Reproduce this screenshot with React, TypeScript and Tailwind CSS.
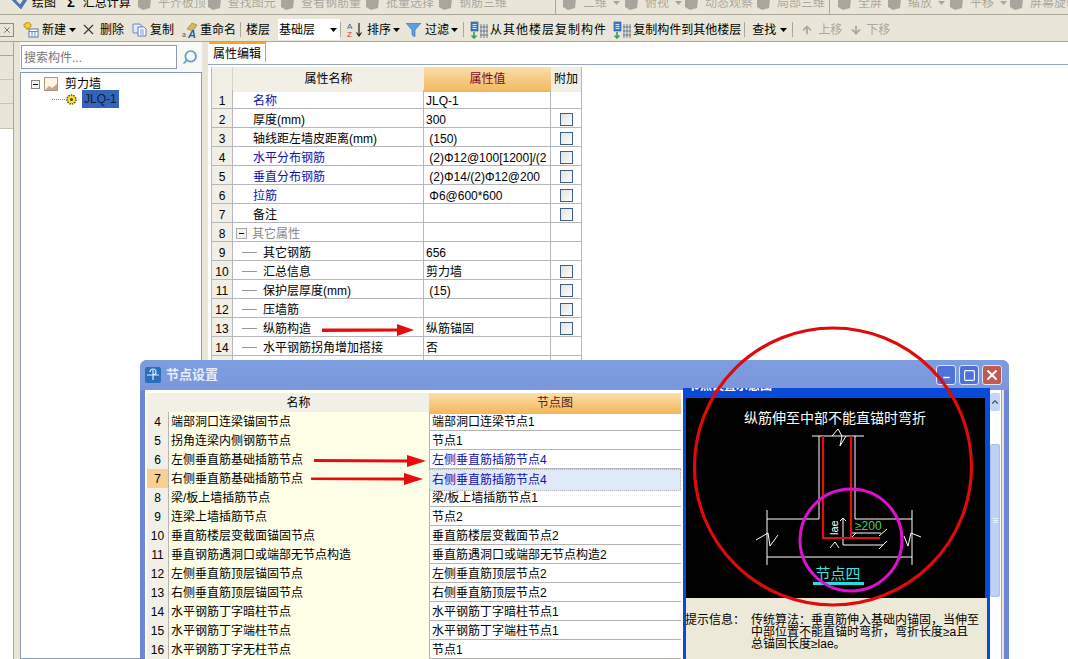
import type { ReactNode } from "react";
import { ArrowDown, ArrowUp, ChevronUp, Minus, Search, Square, X } from "lucide-react";

const Caret = ({ className = "" }: { className?: string }) => (
  <svg width="7" height="4" viewBox="0 0 7 4" className={`shrink-0 ${className}`}>
    <path d="M0 0h7L3.5 4z" fill="currentColor" />
  </svg>
);

const GreyIcon = () => (
  <svg width="15" height="14" viewBox="0 0 15 14" className="shrink-0">
    <path d="M1 2l8-2 5 3-1 9-7 2-5-3z" fill="#a8a69c" />
  </svg>
);

const Sep = ({ className = "" }: { className?: string }) => (
  <div className={`w-px shrink-0 self-stretch bg-[#aca899] ${className}`} />
);

const NewIcon = () => (
  <svg width="16" height="16" viewBox="0 0 16 16" className="ml-[9px] shrink-0">
    <rect x="6" y="7" width="9" height="8" fill="#fff" stroke="#5577aa" />
    <path d="M6 9.5h9M9 9.5v5M12 9.5v5" stroke="#5b8bd0" />
    <path d="M3 0h3v2h2v3H6v2H3V5H1V2h2z" fill="#f4d040" stroke="#a08a20" strokeWidth=".7" />
  </svg>
);

const CopyIcon = () => (
  <svg width="15" height="14" viewBox="0 0 15 14" className="ml-[8px] shrink-0">
    <path d="M1 1h7l2 2v7H1z" fill="#dfe9f8" stroke="#6b8cc0" />
    <path d="M6 4h6l2 2v7H6z" fill="#fff" stroke="#5a7bb5" />
    <path d="M8 7h4M8 9h4M8 11h4" stroke="#7a9ad0" />
  </svg>
);

const RenameIcon = () => (
  <svg width="16" height="16" viewBox="0 0 16 16" className="ml-[8px] shrink-0">
    <path d="M5 7l5-6 5 2-4 6z" fill="#d8b850" stroke="#8a7a40" strokeWidth=".6" />
    <text x="0" y="15" fontSize="7" fill="#555">a</text>
    <text x="6" y="15.5" fontSize="11" fontWeight="700" fontStyle="italic" fill="#2a5aa8">A</text>
  </svg>
);

const SortIcon = () => (
  <svg width="16" height="16" viewBox="0 0 16 16" className="ml-[6px] shrink-0">
    <text x="0" y="7" fontSize="8" fill="#2a5aa8">A</text>
    <text x="0" y="15" fontSize="8" fill="#c04030">Z</text>
    <path d="M12 1v12M9.5 10.5l2.5 3.500 2.500-3.500" fill="none" stroke="#222" strokeWidth="1.2" />
  </svg>
);

const FunnelIcon = () => (
  <svg width="15" height="14" viewBox="0 0 15 14" className="ml-[6px] shrink-0">
    <path d="M0 0h15L9 7v7L6 12V7z" fill="#5fa0e0" stroke="#35689f" strokeWidth=".6" />
  </svg>
);

const LayerCopyIcon = ({ className = "" }: { className?: string }) => (
  <svg width="18" height="18" viewBox="0 0 18 18" className={`shrink-0 ${className}`}>
    <rect x="1" y="1" width="7" height="9" fill="#3b78d0" stroke="#24508f" strokeWidth=".6" />
    <path d="M2.500 3.500h4M2.500 5.500h4M2.500 7.500h4" stroke="#fff" strokeWidth=".8" />
    <path d="M4 11v6M1.500 14.500L4 17l2.500-2.500" fill="none" stroke="#32a050" strokeWidth="1.6" />
    <path d="M11 3v14M14 3v14M17 3v14M10 6h8M10 10h8M10 14h8" stroke="#53677f" strokeWidth=".8" />
  </svg>
);

const TopItem = ({ label, caret, className }: { label: string; caret?: boolean; className: string }) => (
  <div className={`flex shrink-0 items-center text-[12px] text-[#aaa89c] ${className}`}>
    <GreyIcon />
    <span className="ml-[6px]">{label}</span>
    {caret && <Caret className="ml-[6px] text-[#a8a69c]" />}
  </div>
);

const TopBar = () => (
  <div className="h-[15px] shrink-0 overflow-hidden border-b border-[#aca899] bg-[#e9e6d9]">
    <div className="mt-[-9px] flex h-[24px] items-center whitespace-nowrap">
      <svg width="17" height="16" viewBox="0 0 17 16" className="ml-[12px] shrink-0">
        <path d="M1 2l7 8 6-9 2 2-7 11L0 5z" fill="#4a78c0" stroke="#33507f" strokeWidth=".5" />
      </svg>
      <span className="ml-[3px] text-[12px] text-black">绘图</span>
      <span className="ml-[11px] text-[13px] font-bold text-black">Σ</span>
      <span className="ml-[8px] text-[12px] text-black">汇总计算</span>
      <TopItem label="平齐板顶" className="ml-[6px]" />
      <TopItem label="查找图元" className="ml-[1px]" />
      <TopItem label="查看钢筋量" className="ml-[4px]" />
      <TopItem label="批量选择" className="ml-[4px]" />
      <TopItem label="钢筋三维" className="ml-[4px]" />
      <div className="ml-[48px] h-[24px] w-px shrink-0 bg-[#aca899]" />
      <TopItem label="二维" caret className="ml-[6px]" />
      <TopItem label="俯视" caret className="ml-[4px]" />
      <TopItem label="动态观察" className="ml-[2px]" />
      <TopItem label="局部三维" className="ml-[3px]" />
      <div className="ml-[4px] h-[24px] w-px shrink-0 bg-[#aca899]" />
      <TopItem label="全屏" className="ml-[7px]" />
      <TopItem label="缩放" caret className="ml-[5px]" />
      <TopItem label="平移" caret className="ml-[4px]" />
      <TopItem label="屏幕旋转" className="ml-[2px]" />
    </div>
  </div>
);

const ActionBar = () => (
  <div className="flex h-[27px] shrink-0 items-center whitespace-nowrap border-b border-[#aca899] bg-[#e9e6d9] pt-[3px] text-[12px] text-black">
    <div className="flex h-[14px] w-[14px] shrink-0 items-center justify-center border border-l-0 border-[#8c8c80]">
      <X size={10} strokeWidth={1.5} className="text-[#333]" />
    </div>
    <NewIcon />
    <span className="ml-[3px]">新建</span>
    <Caret className="ml-[3px]" />
    <X size={17} strokeWidth={1.6} className="ml-[4px] shrink-0 text-[#333]" />
    <span className="ml-[3px]">删除</span>
    <CopyIcon />
    <span className="ml-[3px]">复制</span>
    <RenameIcon />
    <span className="ml-[2px]">重命名</span>
    <Sep className="my-[4px] ml-[4px]" />
    <span className="ml-[5px]">楼层</span>
    <div className="ml-[8px] flex h-[21px] w-[62px] shrink-0 items-center bg-white pl-[1px]">
      基础层
      <Caret className="ml-[15px]" />
    </div>
    <Sep className="my-[4px]" />
    <SortIcon />
    <span className="ml-[4px]">排序</span>
    <Caret className="ml-[2px]" />
    <FunnelIcon />
    <span className="ml-[4px]">过滤</span>
    <Caret className="ml-[2px]" />
    <Sep className="my-[4px] ml-[5px]" />
    <LayerCopyIcon className="ml-[6px]" />
    <span className="ml-[2px] tracking-[1px]">从其他楼层复制构件</span>
    <LayerCopyIcon className="ml-[6px]" />
    <span className="ml-[2px]">复制构件到其他楼层</span>
    <Sep className="my-[4px] ml-[3px]" />
    <span className="ml-[7px]">查找</span>
    <Caret className="ml-[4px]" />
    <Sep className="my-[4px] ml-[5px]" />
    <ArrowUp size={12} strokeWidth={3.5} className="ml-[8px] shrink-0 text-[#a8a69c]" />
    <span className="ml-[5px] text-[#aaa89c]">上移</span>
    <ArrowDown size={12} strokeWidth={3.5} className="ml-[8px] shrink-0 text-[#a8a69c]" />
    <span className="ml-[4px] text-[#aaa89c]">下移</span>
  </div>
);

const LeftRail = () => (
  <div className="w-[14px] shrink-0 border-r border-[#aca899] bg-[#e9e6d9]">
    <div className="h-[14px] border-b border-[#aca899]" />
    <div className="h-[24px] border-b border-[#c8c5b5]" />
    <div className="h-[24px] border-b border-[#c8c5b5]" />
    <div className="h-[25px] border-b border-[#c8c5b5]" />
    <div className="h-full bg-white" />
  </div>
);

const TreePane = () => (
  <div className="flex w-[194px] shrink-0 flex-col bg-[#e9e6d9] pl-[6px] pr-[6px]">
    <div className="flex h-[30px] shrink-0 items-center bg-[#f8f8f4] pl-[1px] pr-[1px]">
      <div className="flex h-[24px] w-[156px] items-center border border-[#8c9cac] bg-white pl-[2px] pt-[2px] text-[12px] text-[#777]">
        搜索构件...
      </div>
      <Search size={16} strokeWidth={2.6} className="ml-[5px] scale-x-[-1] text-[#5b9bd0]" />
    </div>
    <div className="flex-1 border border-[#8c9cac] bg-white pl-[10px] pt-[2px] text-[12px] text-black">
      <div className="flex h-[18px] items-center">
        <div className="flex h-[9px] w-[9px] items-center justify-center border border-[#888] bg-[#f2f2ee]">
          <div className="h-px w-[5px] bg-black" />
        </div>
        <svg width="14" height="14" viewBox="0 0 14 14" className="ml-[4px]">
          <rect x=".5" y=".5" width="13" height="13" fill="#fff3e4" stroke="#a89880" />
          <path d="M1 13l4-4 3 2 5-4v6z" fill="#c8a890" />
        </svg>
        <span className="ml-[7px]">剪力墙</span>
      </div>
      <div className="mt-[-2px] flex h-[16px] items-center pl-[21px]">
        <div className="w-[13px] border-t border-dotted border-[#888]" />
        <svg width="11" height="11" viewBox="0 0 11 11" className="ml-[1px]">
          <circle cx="5.500" cy="5.500" r="4.500" fill="#f2e040" stroke="#554a00" strokeWidth="1.4" strokeDasharray="1.5 1" />
          <circle cx="5.500" cy="5.500" r="1.500" fill="#554a00" />
        </svg>
        <span className="ml-[5px] bg-[#3366bb] px-[2px] text-[#0c1a40]">JLQ-1</span>
      </div>
    </div>
  </div>
);

const Check = () => (
  <div className="h-[13px] w-[13px] border border-[#3f6080] bg-gradient-to-br from-[#dfe3e2] to-white" />
);

type PropRow = { name: string; value: string; check?: boolean; blue?: boolean; child?: boolean; group?: boolean };

const propRows: PropRow[] = [
  { name: "名称", value: "JLQ-1", blue: true },
  { name: "厚度(mm)", value: "300", check: true },
  { name: "轴线距左墙皮距离(mm)", value: " (150)", check: true },
  { name: "水平分布钢筋", value: " (2)Φ12@100[1200]/(2", check: true, blue: true },
  { name: "垂直分布钢筋", value: " (2)Φ14/(2)Φ12@200", check: true, blue: true },
  { name: "拉筋", value: " Φ6@600*600", check: true, blue: true },
  { name: "备注", value: "", check: true },
  { name: "其它属性", value: "", group: true },
  { name: "其它钢筋", value: "656", child: true },
  { name: "汇总信息", value: "剪力墙", check: true, child: true },
  { name: "保护层厚度(mm)", value: " (15)", check: true, child: true },
  { name: "压墙筋", value: "", check: true, child: true },
  { name: "纵筋构造", value: "纵筋锚固", check: true, child: true },
  { name: "水平钢筋拐角增加搭接", value: "否", child: true },
  { name: "", value: "", child: true },
];

const PropCell = ({ children, className = "" }: { children?: ReactNode; className?: string }) => (
  <div className={`flex h-[19px] items-center overflow-hidden whitespace-pre border-b border-r border-[#b4b8bc] pt-[3px] ${className}`}>
    {children}
  </div>
);

const PropTable = () => (
  <div className="ml-[3px] mt-[2px] w-[370px] border-l border-[#b4b8bc] text-[12px] text-black">
    <div className="grid h-[23px] grid-cols-[21px_191px_127px_31px] border-b border-[#b4b8bc] text-center leading-[25px]">
      <div className="border-r border-[#d8d6c8] bg-[#f1efe6]" />
      <div className="bg-[#f1efe6]">属性名称</div>
      <div className="bg-gradient-to-b from-[#f9dfa8] to-[#f2b65a] text-[#7a0a2a]">属性值</div>
      <div className="border-r border-[#b4b8bc] bg-[#f1efe6]">附加</div>
    </div>
    {propRows.map((row, i) => (
      <div key={i} className="grid grid-cols-[21px_191px_127px_31px]">
        <PropCell className="justify-center bg-[#f1efe6]">{i + 1}</PropCell>
        <PropCell className={row.group ? "pl-[3px] text-[#888]" : row.child ? "pl-[9px]" : "pl-[20px]"}>
          {row.group && (
            <div className="mr-[5px] flex h-[11px] w-[11px] items-center justify-center border border-[#aaa] bg-[#f2f2ee]">
              <div className="h-px w-[5px] bg-black" />
            </div>
          )}
          {row.child && <div className="mr-[6px] h-px w-[15px] bg-[#999]" />}
          <span className={row.blue ? "text-[#1010b0]" : ""}>{row.name}</span>
        </PropCell>
        <PropCell className="pl-[2px]">{row.value}</PropCell>
        <PropCell className="justify-center">{row.check && <Check />}</PropCell>
      </div>
    ))}
  </div>
);

const MainPane = () => (
  <div className="flex-1 bg-white">
    <div className="h-[23px] border-b border-[#9aa6b4] pl-[1px]">
      <div className="h-[20px] w-[57px] border-r border-t-2 border-[#9aa6b4] border-t-[#f0a830] bg-white text-center text-[12px] leading-[21px] text-black">
        属性编辑
      </div>
    </div>
    <PropTable />
  </div>
);

const nodeRows = [
  ["4", "端部洞口连梁锚固节点", "端部洞口连梁节点1"],
  ["5", "拐角连梁内侧钢筋节点", "节点1"],
  ["6", "左侧垂直筋基础插筋节点", "左侧垂直筋插筋节点4"],
  ["7", "右侧垂直筋基础插筋节点", "右侧垂直筋插筋节点4"],
  ["8", "梁/板上墙插筋节点", "梁/板上墙插筋节点1"],
  ["9", "连梁上墙插筋节点", "节点2"],
  ["10", "垂直筋楼层变截面锚固节点", "垂直筋楼层变截面节点2"],
  ["11", "垂直钢筋遇洞口或端部无节点构造", "垂直筋遇洞口或端部无节点构造2"],
  ["12", "左侧垂直筋顶层锚固节点", "左侧垂直筋顶层节点2"],
  ["13", "右侧垂直筋顶层锚固节点", "右侧垂直筋顶层节点2"],
  ["14", "水平钢筋丁字暗柱节点", "水平钢筋丁字暗柱节点1"],
  ["15", "水平钢筋丁字端柱节点", "水平钢筋丁字端柱节点1"],
  ["16", "水平钢筋丁字无柱节点", "节点1"],
];

const NodeTable = () => (
  <div className="w-[534px] shrink-0 text-[12px] text-black">
    <div className="grid h-[19px] grid-cols-[21px_261px_252px] border-b border-[#b4b4b0] text-center leading-[21px]">
      <div className="bg-[#f1efe6]" />
      <div className="bg-[#f1efe6]">名称</div>
      <div className="bg-gradient-to-b from-[#f9dfa8] to-[#f2b65a] text-[#5a1a10]">节点图</div>
    </div>
    {nodeRows.map(([no, name, node]) => (
      <div key={no} className="grid h-[19px] grid-cols-[21px_261px_252px] border-b border-[#b4b4b0]">
        <div className={`text-center leading-[20px] ${no === "7" ? "bg-[#f9cf94]" : "bg-[#f1efe6]"}`}>{no}</div>
        <div className="border-l border-[#b4b4b0] bg-[#ffffe8] pl-[2px] leading-[20px]">{name}</div>
        <div
          className={`border-l border-[#b4b4b0] pl-[2px] leading-[20px] ${
            no === "7" ? "border border-dotted border-[#334] bg-[#dfe9f7] text-[#1010b0]" : no === "6" ? "text-[#1010b0]" : ""
          }`}
        >
          {node}
        </div>
      </div>
    ))}
  </div>
);

const RebarDrawing = () => (
  <svg viewBox="686 398 299 200" className="h-[200px] w-[299px] shrink-0">
    <rect x="686" y="398" width="299" height="200" fill="#000" />
    <text x="835" y="423" textAnchor="middle" fontSize="14" fill="#fff">纵筋伸至中部不能直锚时弯折</text>
    <g fill="none" stroke="#fff" strokeWidth="1">
      <path d="M812 436h52M819 436v83H767M855 436v83h57M767 510v55M912 510v55M767 557h145" />
      <path d="M832 436l6-7 4 7-2 10 6-10" />
      <path d="M756 540l12-7 2 13 8-11M921 537l-10-4-3 13-4-10" />
      <path d="M843 518v27h40M840 521l3-3 3 3M879 549l8-8M879 536l8-7M851 538l5-5M851 533h30M830 548l5-6 4 6" />
    </g>
    <path d="M823 436v102h57M851 436v102" fill="none" stroke="#e01010" strokeWidth="2.200" />
    <text x="0" y="0" fontSize="11" fill="#fff" transform="translate(838 535) rotate(-90)">lae</text>
    <text x="855" y="530" fontSize="12" fill="#50d060">≥200</text>
    <text x="838" y="579" textAnchor="middle" fontSize="15" fill="#40e0e0">节点四</text>
    <rect x="813" y="582" width="51" height="3" fill="#20e0e0" />
  </svg>
);

const PreviewPane = () => (
  <div className="absolute left-[543px] top-[28px] flex h-[271px] w-[307px] flex-col overflow-hidden border-x-[3px] border-[#0a4ad8] bg-[#0a4ad8] pt-[10px]">
    <div className="absolute left-0 top-[-11px] pl-[2px] text-[12px] font-bold text-white">节点设置示意图</div>
    <RebarDrawing />
    <div className="flex flex-1 gap-[6px] bg-[#ece9d8] pl-[1px] pt-[16px] text-[12px] leading-[12px] text-black">
      <span className="ml-[-2px] shrink-0">提示信息：</span>
      <div>
        <div className="whitespace-nowrap">传统算法：垂直筋伸入基础内锚固，当伸至</div>
        <div className="whitespace-nowrap">中部位置不能直锚时弯折，弯折长度≥a且</div>
        <div className="whitespace-nowrap">总锚固长度≥lae。</div>
      </div>
    </div>
  </div>
);

const NodeDialog = () => (
  <div className="absolute left-[140px] top-[360px] h-[299px] w-[869px] overflow-hidden rounded-t-[7px] bg-[#6f86d8]">
    <div className="flex h-[30px] items-center bg-gradient-to-b from-[#7d9de0] to-[#7c97dc] pl-[5px]">
      <svg width="16" height="16" viewBox="0 0 16 16">
        <rect width="16" height="16" rx="2" fill="#2a70b8" />
        <path d="M2 8h12M8 3v10M8 8a3 3 0 1 0-3-3" fill="none" stroke="#d8f0f8" strokeWidth="1.2" />
      </svg>
      <span className="ml-[5px] text-[13px] font-bold text-[#e8eefc]">节点设置</span>
      <div className="ml-auto mr-[7px] flex gap-[3px]">
        <div className="flex h-[20px] w-[20px] items-end justify-center rounded-[3px] border border-[#dce6fa] bg-[#4f72d8] pb-[2px]">
          <Minus size={9} strokeWidth={4} className="text-white" />
        </div>
        <div className="flex h-[20px] w-[20px] items-center justify-center rounded-[3px] border border-[#dce6fa] bg-[#4f72d8]">
          <Square size={13} strokeWidth={2} className="text-white" />
        </div>
        <div className="flex h-[20px] w-[20px] items-center justify-center rounded-[3px] border border-[#dce6fa] bg-[#c05a50]">
          <X size={16} strokeWidth={3} className="text-white" />
        </div>
      </div>
    </div>
    <div className="mx-[5px] flex h-[269px] bg-white pl-[2px] pt-[3px]">
      <NodeTable />
    </div>
    <PreviewPane />
    <div className="absolute left-[850px] top-[33px] h-[266px] w-[10px] bg-white">
      <div className="flex h-[18px] items-center justify-center rounded-[2px] bg-[#c4d6f4]">
        <ChevronUp size={10} strokeWidth={3} className="text-[#44607f]" />
      </div>
      <div className="mt-[33px] flex h-[153px] flex-col items-center justify-center gap-px rounded-[2px] border border-[#aac0e4] bg-[#bdd1f2]">
        <div className="h-px w-[5px] bg-[#e8f0fc]" />
        <div className="h-px w-[5px] bg-[#e8f0fc]" />
        <div className="h-px w-[5px] bg-[#e8f0fc]" />
      </div>
    </div>
    <div className="absolute left-[861px] top-[30px] h-[269px] w-[3px] border-l border-[#a8a898] bg-[#e9e6d9]" />
  </div>
);

const Annotations = () => (
  <svg viewBox="0 0 1068 659" className="pointer-events-none absolute left-0 top-0 h-[659px] w-[1068px]">
    <g fill="#e80c0c">
      <path d="M322 328.500h75v-4.500l17 6-17 6v-4.500l-75 .5z" />
      <path d="M314 459l93 .5v-4.500l19 6-19 6v-4.500l-93-.5z" />
      <path d="M311 477.500h93v-4.500l19 6-19 6v-4.500l-93-.5z" />
    </g>
    <circle cx="833" cy="466.500" r="138.500" fill="none" stroke="#e00a0a" strokeWidth="3.200" />
    <circle cx="851" cy="540" r="51" fill="none" stroke="#e010d0" strokeWidth="3" />
  </svg>
);

export default function App() {
  return (
    <div className="relative flex h-[659px] w-[1068px] flex-col overflow-hidden bg-white font-['Liberation_Sans','Noto_Sans_CJK_SC',sans-serif]">
      <TopBar />
      <ActionBar />
      <div className="flex flex-1">
        <LeftRail />
        <TreePane />
        <MainPane />
      </div>
      <NodeDialog />
      <Annotations />
    </div>
  );
}
